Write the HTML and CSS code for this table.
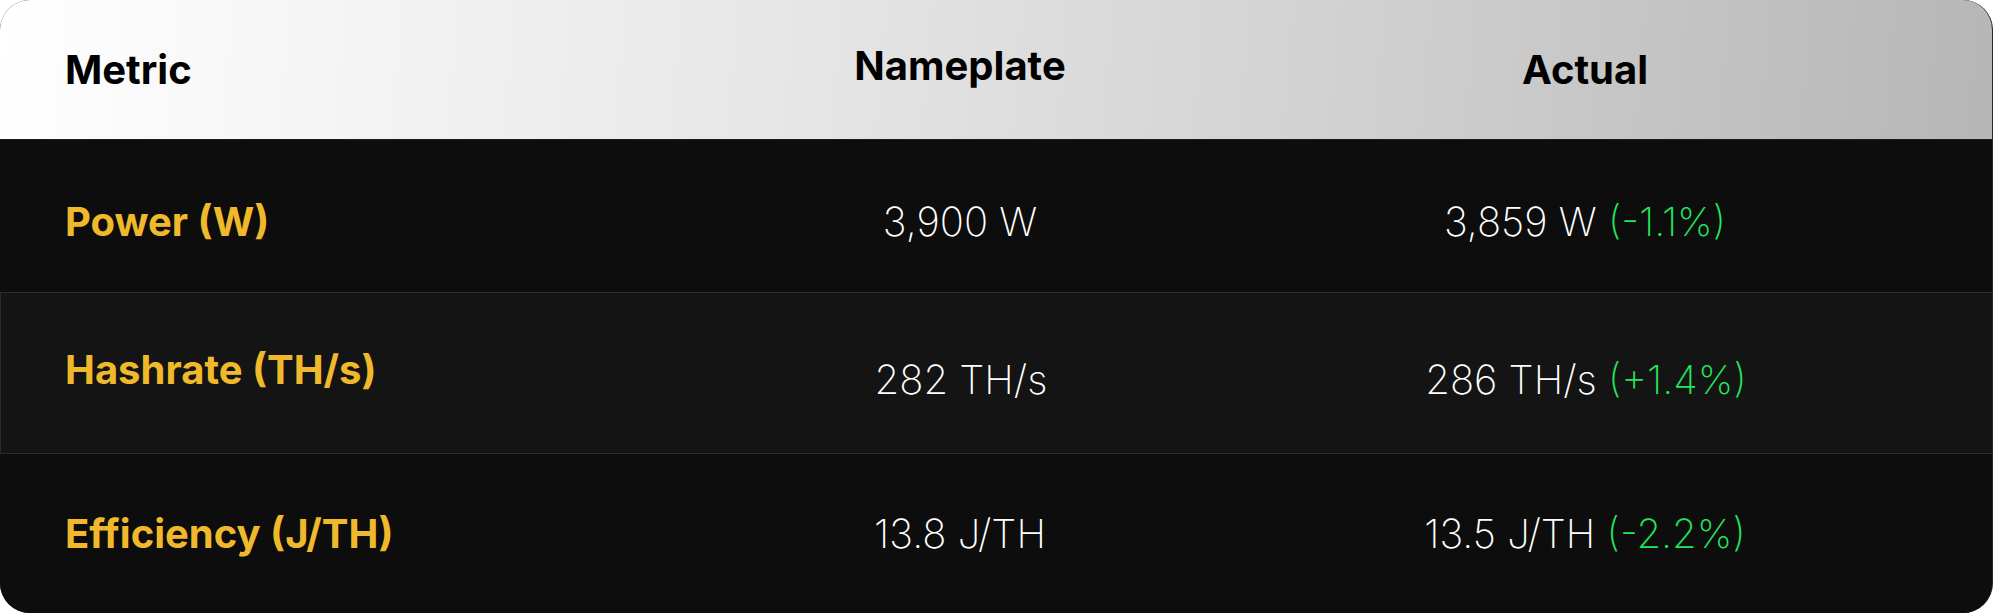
FILE: index.html
```html
<!DOCTYPE html>
<html>
<head>
<meta charset="utf-8">
<link rel="stylesheet" href="styles.css">
</head>
<body>
<div class="table">
  <div class="row head">
    <div class="cell label">Metric</div>
    <div class="cell center up">Nameplate</div>
    <div class="cell center">Actual</div>
  </div>
  <div class="row r1">
    <div class="cell label metric">Power (W)</div>
    <div class="cell center val">3,900 W</div>
    <div class="cell center val">3,859 W&nbsp;<span class="delta">(-1.1%)</span></div>
  </div>
  <div class="row r2">
    <div class="cell label metric">Hashrate (TH/s)</div>
    <div class="cell center val">282 TH/s</div>
    <div class="cell center val">286 TH/s&nbsp;<span class="delta">(+1.4%)</span></div>
  </div>
  <div class="row r3">
    <div class="cell label metric">Efficiency (J/TH)</div>
    <div class="cell center val">13.8 J/TH</div>
    <div class="cell center val">13.5 J/TH&nbsp;<span class="delta">(-2.2%)</span></div>
  </div>
</div>
</body>
</html>
```
FILE: styles.css
```css
html, body {
  margin: 0;
  padding: 0;
  background: #ffffff;
}
body {
  font-family: Inter, "Noto Sans", sans-serif;
  font-size: 40px;
  line-height: 48px;
}
.table {
  width: 1993px;
  height: 613px;
  border-radius: 30px;
  overflow: hidden;
  background: #0d0d0d;
  display: flex;
  flex-direction: column;
  box-sizing: border-box;
  border-right: 1px solid #2a2a2a;
}
.row {
  display: grid;
  grid-template-columns: 648px 624px 626px;
  box-sizing: border-box;
}
.cell {
  display: flex;
  align-items: center;
  white-space: nowrap;
}
.center {
  justify-content: center;
}
.label {
  padding-left: 65px;
}
.head {
  height: 140px;
  background: linear-gradient(95deg, #ffffff 0%, #e6e6e6 40%, #cbcbcb 75%, #b6b6b6 100%);
  color: #000;
  font-weight: 700;
  border-bottom: 1px solid #1c1c1c;
}
.up {
  padding-bottom: 7px;
}
.metric {
  color: #f0b92c;
  font-weight: 700;
}
.val {
  color: #ffffff;
  font-weight: 200;
}
.delta {
  color: #22e75a;
}
.r1 {
  height: 152px;
  background: #0d0d0d;
}
.r1 .cell {
  padding-top: 12px;
}
.r2 {
  height: 162px;
  background: #141414;
  border-top: 1px solid #2c2c2c;
  border-bottom: 1px solid #2c2c2c;
  border-left: 1px solid #2c2c2c;
}
.r2 .label {
  padding-bottom: 6px;
  padding-left: 64px;
}
.r2 .val {
  padding-top: 14px;
}
.r3 {
  height: 159px;
  background: #0d0d0d;
}
```
